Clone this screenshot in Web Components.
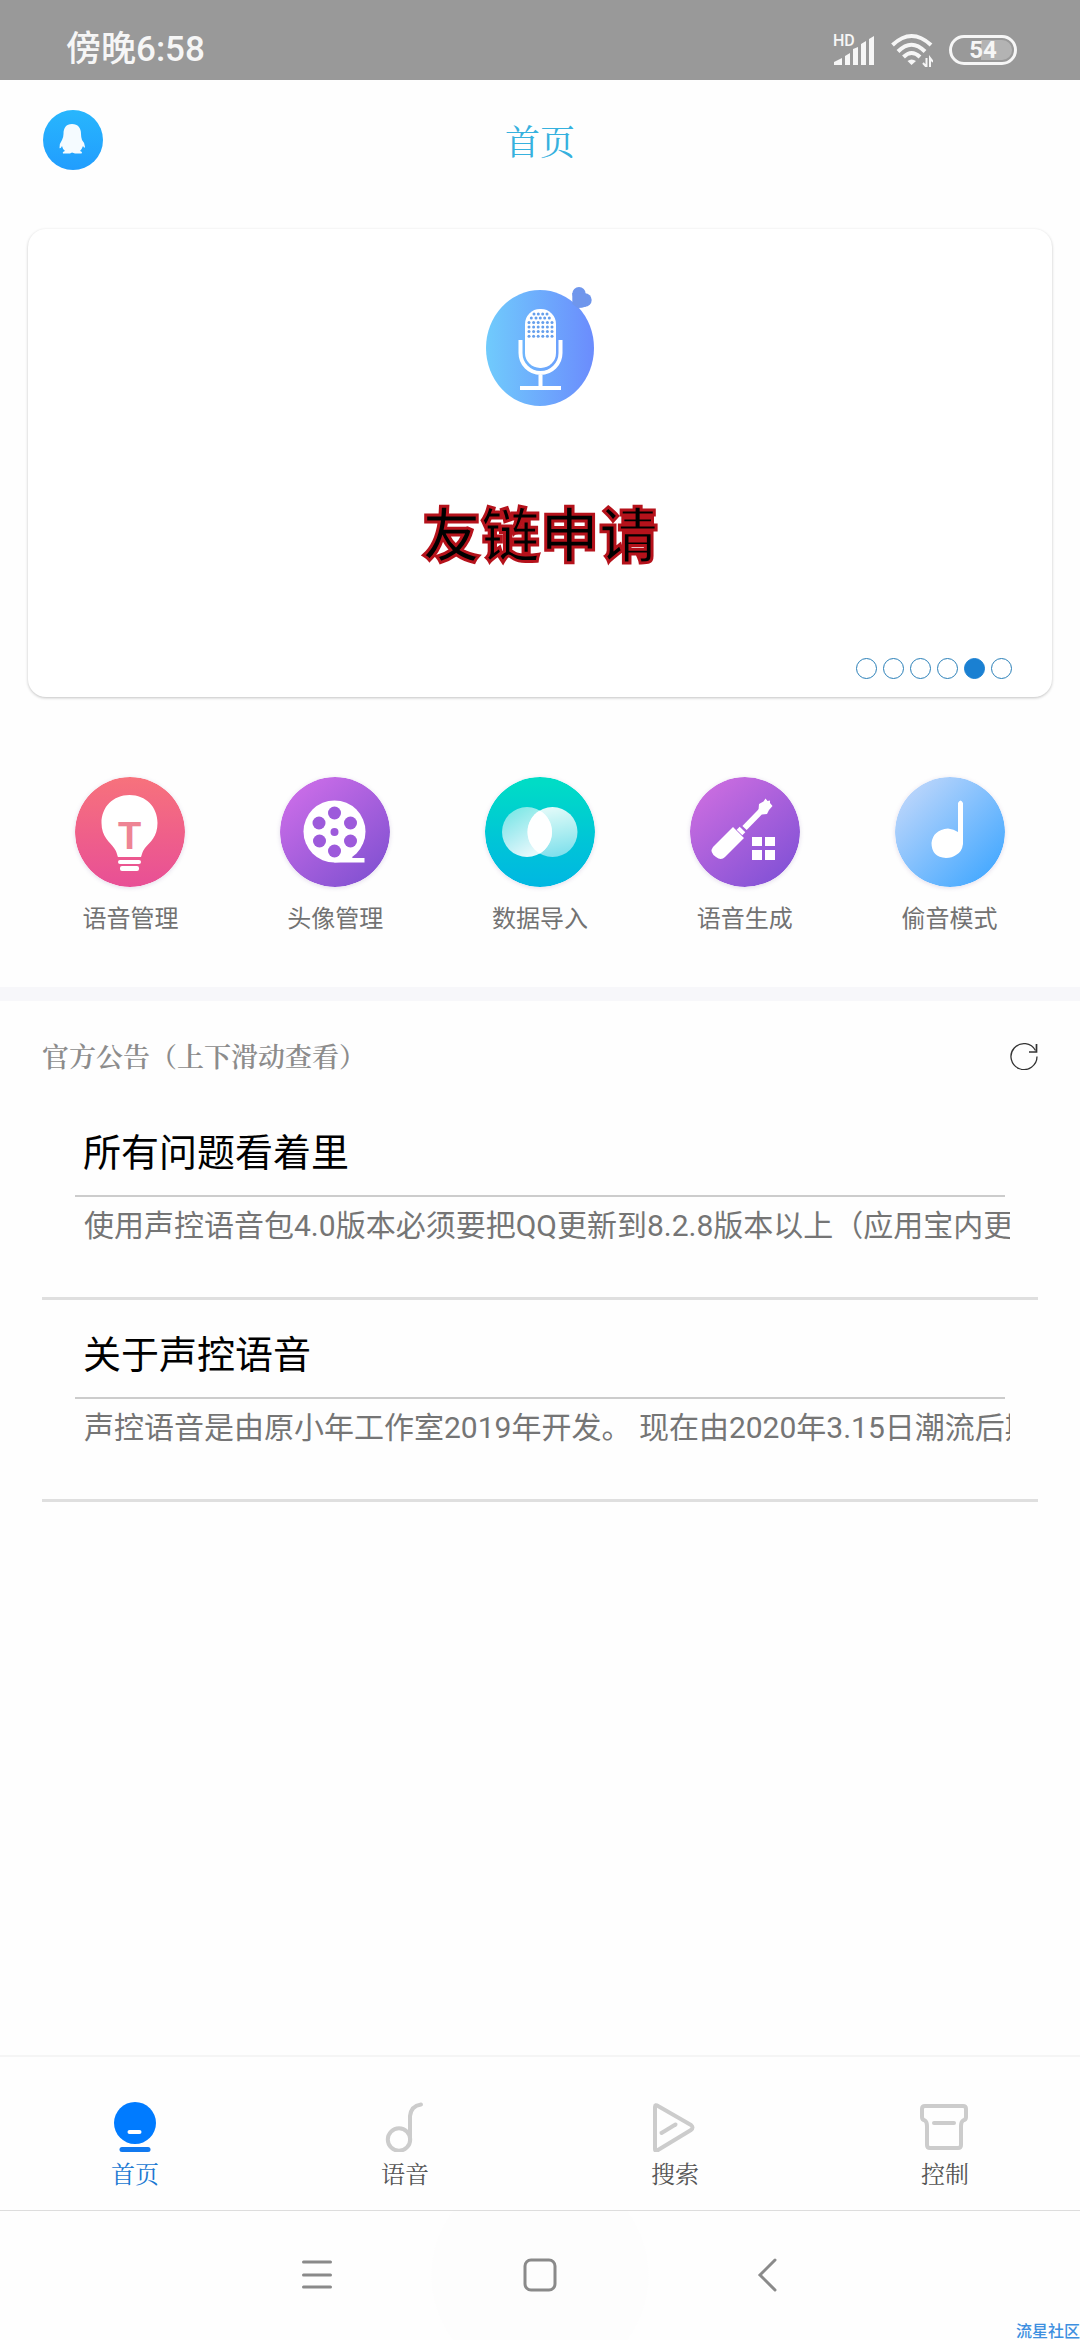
<!DOCTYPE html>
<html lang="zh-CN">
<head>
<meta charset="utf-8">
<meta name="viewport" content="width=device-width, initial-scale=1">
<title>首页</title>
<style>
  body {
    margin: 0;
    background: #fefefe;
    font-family: Roboto, "Noto Sans CJK SC", sans-serif;
    --serif: "Noto Serif CJK SC", "Noto Sans CJK SC", serif;
  }
</style>
</head>
<body>
<app-shell>
  <status-bar slot="top" time="傍晚6:58" battery="54"></status-bar>
  <top-bar slot="top">首页</top-bar>

  <banner-card count="6" active="4">友链申请</banner-card>
  <shortcut-grid>
    <shortcut-item icon="bulb">语音管理</shortcut-item>
    <shortcut-item icon="reel">头像管理</shortcut-item>
    <shortcut-item icon="merge">数据导入</shortcut-item>
    <shortcut-item icon="tool">语音生成</shortcut-item>
    <shortcut-item icon="note">偷音模式</shortcut-item>
  </shortcut-grid>
  <notice-list>
    <span slot="heading">官方公告（上下滑动查看）</span>
    <notice-item>
      <span slot="title">所有问题看着里</span>
      使用声控语音包4.0版本必须要把QQ更新到8.2.8版本以上（应用宝内更
    </notice-item>
    <notice-item>
      <span slot="title">关于声控语音</span>
      声控语音是由原小年工作室2019年开发。 现在由2020年3.15日潮流后期
    </notice-item>
  </notice-list>

  <tab-bar slot="bottom">
    <tab-item icon="home" active>首页</tab-item>
    <tab-item icon="music">语音</tab-item>
    <tab-item icon="search">搜索</tab-item>
    <tab-item icon="control">控制</tab-item>
  </tab-bar>
  <system-nav slot="bottom">流星社区</system-nav>
</app-shell>

<script>
// Ikon bulat untuk menu pintasan
const shortcutIcons = {
  bulb: `
    <linearGradient id="g" x1="0" y1="0" x2="0" y2="1"><stop stop-color="#f7727c"/><stop offset="1" stop-color="#e84f96"/></linearGradient>
    <circle cx="55" cy="55" r="55" fill="url(#g)"/>
    <path fill="#fff" d="M54.500 18C38 18 26.500 30 26.500 46C26.500 60 35 65 39 71C42 75 42 78 43 80H66C67 78 67 75 70 71C75 65 82.500 60 82.500 46C82.500 30 71 18 54.500 18Z"/>
    <rect x="43" y="83" width="23" height="4" rx="2" fill="#fff"/>
    <rect x="45" y="89" width="19" height="5" rx="2" fill="#fff"/>
    <text x="54.500" y="72" text-anchor="middle" font-family="Liberation Sans" font-weight="700" font-size="38" fill="#ee8494">T</text>`,
  reel: `
    <linearGradient id="g" x1=".1" y1=".1" x2=".8" y2=".95"><stop stop-color="#cb6de8"/><stop offset="1" stop-color="#8452d2"/></linearGradient>
    <circle cx="55" cy="55" r="55" fill="url(#g)"/>
    <circle cx="54.500" cy="54.500" r="31" fill="#fff"/>
    <path fill="#fff" d="M54 85.500H84.500V81H73L66 76Z"/>
    <g fill="#9d5adb"><circle cx="54.500" cy="36" r="6.500"/><circle cx="70.500" cy="46" r="6.500"/><circle cx="70.500" cy="64" r="6.500"/><circle cx="54.500" cy="74" r="6.500"/><circle cx="39.500" cy="64" r="6.500"/><circle cx="39" cy="46" r="6.500"/><circle cx="54.500" cy="55" r="4"/></g>`,
  merge: `
    <linearGradient id="g" x1="0" y1="0" x2="0" y2="1"><stop offset=".05" stop-color="#00dcc6"/><stop offset=".55" stop-color="#00c6d6"/><stop offset="1" stop-color="#00b7e2"/></linearGradient>
    <linearGradient id="l" x1="0" y1=".2" x2=".5" y2="1"><stop stop-color="#fff" stop-opacity=".5"/><stop offset="1" stop-color="#fff" stop-opacity=".9"/></linearGradient>
    <linearGradient id="r" x1=".3" y1="0" x2=".5" y2="1"><stop stop-color="#fff" stop-opacity=".9"/><stop offset="1" stop-color="#fff" stop-opacity=".5"/></linearGradient>
    <circle cx="55" cy="55" r="55" fill="url(#g)"/>
    <circle cx="42" cy="55" r="25" fill="url(#l)"/>
    <circle cx="67.500" cy="55" r="25" fill="url(#r)"/>
    <path fill="#fff" fill-opacity=".9" d="M54.750 33.500A25 25 0 0 1 54.750 76.500A25 25 0 0 1 54.750 33.500Z"/>`,
  tool: `
    <linearGradient id="g" x1=".1" y1=".1" x2=".8" y2=".95"><stop stop-color="#cb6de0"/><stop offset="1" stop-color="#8452d6"/></linearGradient>
    <circle cx="55" cy="55" r="55" fill="url(#g)"/>
    <path fill="#fff" d="M43 50L54 61L35 80Q31 84 26 80Q19 75 23 70Z"/>
    <path stroke="#fff" stroke-width="8" d="M49.500 55.500L52.500 52.500"/>
    <path stroke="#fff" stroke-width="6" d="M54.500 51L72 33"/>
    <path fill="#fff" d="M68.500 33L69 27L73.500 24.500L75.500 21.500L77.500 24L80 23.500V26L82.500 29L79 33L77 37L72 37.500Z"/>
    <path fill="#fff" d="M62 60h10v9h-10zM75 60h10v9h-10zM62 73h10v10h-10zM75 73h10v10h-10z"/>`,
  note: `
    <linearGradient id="g" x1=".1" y1=".1" x2=".85" y2=".85"><stop stop-color="#bdd6fb"/><stop offset="1" stop-color="#4babff"/></linearGradient>
    <circle cx="55" cy="55" r="55" fill="url(#g)"/>
    <path fill="#fff" d="M63 26Q65.500 21 68 26V67Q67 75 61 78Q57 81 51 81Q36.500 80 36.500 66Q38 53 53 51.500Q59 52 63 55Z"/>`
};

// Ikon untuk tab bawah
const tabIcons = {
  home: `
    <circle cx="25" cy="21" r="21" fill="#007bff"/>
    <path stroke="#fff" stroke-width="4" stroke-linecap="round" d="M19.500 30H29.500"/>
    <path stroke="#1079f0" stroke-width="5" stroke-linecap="round" d="M12 47.500H38"/>`,
  music: `<g class="line"><circle cx="19" cy="37.500" r="11.200"/><path d="M30 38V14Q31 4 41 2.500"/></g>`,
  search: `<g class="line"><path d="M5 5Q5 2 8 4L41 23Q44 25.500 41 28L8 48Q5 50 5 47Z"/><path d="M11.500 31L25.500 22.500"/></g>`,
  control: `<g class="line"><path d="M5 4H43Q46 4 46 7V15Q46 18 43 18.500Q41 20 41 24V43Q41 46 38 46H10Q7 46 7 43V24Q7 20 5 18.500Q2 18 2 15V7Q2 4 5 4Z"/><path d="M14 21H34"/></g>`
};

const micDots = [
  [27, [50, 54.3, 58.7, 63]],
  [31, [47.3, 52, 56.3, 60.7, 65.3]],
  ...[35.5, 40, 44.5, 49.3].map((y) => [y, [45, 49.6, 54.2, 58.8, 63.4, 68]])
];

class BaseElement extends HTMLElement {
  constructor() {
    super();
    this.attachShadow({ mode: 'open' });
  }

  connectedCallback() {
    this.shadowRoot.innerHTML = this.render();
  }
}

class AppShell extends BaseElement {
  render() {
    return `
      <style>
        :host { display: flex; flex-direction: column; min-height: 100vh; }
        main { flex: 1; }
      </style>
      <slot name="top"></slot>
      <main><slot></slot></main>
      <slot name="bottom"></slot>
    `;
  }
}
customElements.define('app-shell', AppShell);

class StatusBar extends BaseElement {
  render() {
    return `
      <style>
        :host {
          display: flex;
          align-items: center;
          height: 60px;
          padding: 20px 63px 0 66px;
          background: #999;
          color: #f6f6f6;
          box-sizing: content-box;
        }
        .time { flex: 1; font-size: 35px; line-height: 40px; font-weight: 500; }
        .icons { display: flex; align-items: center; gap: 16px; }
        svg { display: block; }
        .battery {
          box-sizing: border-box;
          width: 68px;
          height: 30px;
          border: 3px solid #f6f6f6;
          border-radius: 15px;
          padding: 2px;
          font-size: 24px;
          line-height: 20px;
          font-weight: 700;
          text-align: center;
        }
        .level {
          display: block;
          border-radius: 10px;
          background: linear-gradient(to left, #b3b3b3 54%, transparent 54%);
        }
      </style>
      <span class="time">${this.getAttribute('time')}</span>
      <div class="icons">
        <svg width="42" height="32" viewBox="0 0 42 32" fill="#f6f6f6">
          <text x="0" y="12" font-family="Roboto" font-weight="500" font-size="16">HD</text>
          <path d="M1 31V28L9 24V31ZM12 31V22L17 19V31ZM20 31V15L25 13V31ZM28 31V10L33 7V31ZM36 31V5L41 2V31Z"/>
        </svg>
        <svg width="42" height="34" viewBox="0 0 42 34" fill="none" stroke="#f6f6f6" stroke-width="4">
          <path d="M1.500 12Q20.500 -6 40 12M7 18.500Q20.500 5 34 18.500M12.500 24Q20.500 16 29 24"/>
          <path fill="#f6f6f6" stroke="none" d="M16.500 28Q20.500 25 25 28L20.500 32Z"/>
          <path stroke-width="2" d="M35.500 25V34L32 30M39 34V25L42 29"/>
        </svg>
        <div class="battery"><span class="level">${this.getAttribute('battery')}</span></div>
      </div>
    `;
  }
}
customElements.define('status-bar', StatusBar);

class TopBar extends BaseElement {
  render() {
    return `
      <style>
        :host {
          display: grid;
          grid-template-columns: 60px 1fr 60px;
          align-items: center;
          height: 120px;
          padding: 0 43px;
        }
        button { border: 0; padding: 0; background: none; }
        svg { display: block; }
        h1 {
          margin: 0;
          font: 400 35px/44px var(--serif);
          color: #36b1de;
          text-align: center;
        }
      </style>
      <button aria-label="QQ">
        <svg width="60" height="60" viewBox="0 0 60 60">
          <linearGradient id="q" x1="0" y1="0" x2="0" y2="1"><stop stop-color="#28b6fd"/><stop offset="1" stop-color="#219dfe"/></linearGradient>
          <circle cx="30" cy="30" r="30" fill="url(#q)"/>
          <path fill="#f5fbff" d="M29 14C23 14 20.500 18 20.500 24Q20.500 27 19 30Q16 34 16.500 38Q17.500 39 19 36Q19.500 39 22 41Q19 42 20 43.500H27L29 42.500L32 43.500H38.500Q40 42 37 41Q39 39 40 36Q41.500 39 42 37Q42 33 39 30Q38 27 38 24C38 18 35 14 29 14Z"/>
        </svg>
      </button>
      <h1><slot></slot></h1>
    `;
  }
}
customElements.define('top-bar', TopBar);

class BannerCard extends BaseElement {
  render() {
    const count = Number(this.getAttribute('count'));
    const active = Number(this.getAttribute('active'));
    const dots = micDots.map(([y, xs]) => xs.map((x) => `<circle cx="${x}" cy="${y}" r="1.500"/>`).join('')).join('');

    return `
      <style>
        :host {
          display: flex;
          flex-direction: column;
          align-items: center;
          margin: 29px 28px 0;
          padding: 58px 40px 18px;
          border-radius: 18px;
          background: #fff;
          box-shadow: 0 1px 3px rgba(0, 0, 0, .24);
        }
        h2 {
          margin: 94px 0 85px;
          font-size: 59px;
          line-height: 72px;
          font-weight: 700;
          color: #000;
          -webkit-text-stroke: 3px #b5121b;
          paint-order: normal;
        }
        .dots { display: flex; gap: 6px; align-self: flex-end; }
        button {
          box-sizing: border-box;
          width: 21px;
          height: 21px;
          padding: 0;
          border: 1px solid #2a7fb8;
          border-radius: 50%;
          background: none;
        }
        button.on { background: #1a80d2; border-color: #1a80d2; }
      </style>
      <svg width="112" height="120" viewBox="0 0 112 120">
        <linearGradient id="m"><stop stop-color="#70cbfc"/><stop offset="1" stop-color="#6b8cfd"/></linearGradient>
        <ellipse cx="56" cy="61" rx="54" ry="58" fill="url(#m)"/>
        <g fill="#6f96ec"><circle cx="95" cy="6.700" r="6.700"/><circle cx="101" cy="13" r="6.700"/><path d="M88.300 6V17L94 21Q98 21 102 19.500L101 7Z"/></g>
        <rect x="41" y="22" width="31" height="59" rx="15" fill="#fff"/>
        <g fill="#659fec">${dots}</g>
        <g fill="none" stroke="#fff" stroke-width="4"><path d="M36.500 53V66A20 20 0 0 0 76.500 66V53M56.500 86V100M36 101H77"/></g>
      </svg>
      <h2><slot></slot></h2>
      <div class="dots">
        ${Array.from({ length: count }, (_, i) => `<button class="${i === active ? 'on' : ''}" aria-label="${i + 1}"></button>`).join('')}
      </div>
    `;
  }
}
customElements.define('banner-card', BannerCard);

class ShortcutGrid extends BaseElement {
  render() {
    return `
      <style>
        :host {
          display: grid;
          grid-template-columns: repeat(5, 1fr);
          padding: 80px 28px 52px;
        }
      </style>
      <slot></slot>
    `;
  }
}
customElements.define('shortcut-grid', ShortcutGrid);

class ShortcutItem extends BaseElement {
  render() {
    return `
      <style>
        :host { display: flex; justify-content: center; }
        button {
          display: flex;
          flex-direction: column;
          align-items: center;
          gap: 16px;
          padding: 0;
          border: 0;
          background: none;
          font: inherit;
          font-size: 24px;
          line-height: 32px;
          color: #727272;
        }
        svg { display: block; border-radius: 50%; box-shadow: 0 1px 4px rgba(120, 90, 160, .2); }
      </style>
      <button>
        <svg width="110" height="110" viewBox="0 0 110 110">${shortcutIcons[this.getAttribute('icon')]}</svg>
        <span><slot></slot></span>
      </button>
    `;
  }
}
customElements.define('shortcut-item', ShortcutItem);

class NoticeList extends BaseElement {
  render() {
    return `
      <style>
        :host { display: block; border-top: 14px solid #f7f7fa; padding: 35px 42px 0; }
        header { display: flex; align-items: center; justify-content: space-between; margin-bottom: 22px; }
        h2 { margin: 0; font: 600 27px/40px var(--serif); color: #8c8c8c; }
        button { border: 0; padding: 0; background: none; }
        svg { display: block; }
      </style>
      <header>
        <h2><slot name="heading"></slot></h2>
        <button aria-label="刷新">
          <svg width="28" height="28" viewBox="0 0 28 28" fill="none" stroke="#333" stroke-width="1.300">
            <path d="M27 14.500A13 13 0 1 1 25.500 8.500"/>
            <path stroke-width="1.700" d="M26.500 2V10H19"/>
          </svg>
        </button>
      </header>
      <slot></slot>
    `;
  }
}
customElements.define('notice-list', NoticeList);

class NoticeItem extends BaseElement {
  render() {
    return `
      <style>
        :host { display: block; padding: 27px 0 51px; border-bottom: 3px solid #dfdfdf; }
        h3 {
          margin: 0 33px 9px;
          padding: 0 8px 14px;
          border-bottom: 2px solid #ccc;
          font-size: 38px;
          line-height: 56px;
          font-weight: 400;
          color: #000;
        }
        p {
          margin: 0 28px 0 42px;
          overflow: hidden;
          white-space: nowrap;
          font-size: 30px;
          line-height: 40px;
          color: #757575;
        }
      </style>
      <h3><slot name="title"></slot></h3>
      <p><slot></slot></p>
    `;
  }
}
customElements.define('notice-item', NoticeItem);

class TabBar extends BaseElement {
  render() {
    return `
      <style>
        :host {
          display: grid;
          grid-template-columns: repeat(4, 1fr);
          padding: 45px 0 23px;
          border-top: 2px solid #f5f5f5;
        }
      </style>
      <slot></slot>
    `;
  }
}
customElements.define('tab-bar', TabBar);

class TabItem extends BaseElement {
  render() {
    return `
      <style>
        :host { display: flex; justify-content: center; color: #555; }
        :host([active]) { color: #1a78d2; }
        a {
          display: flex;
          flex-direction: column;
          align-items: center;
          gap: 7px;
          color: inherit;
          text-decoration: none;
          font: 400 24px/28px var(--serif);
        }
        svg { display: block; fill: none; }
        .line { stroke: #ccc; stroke-width: 4; stroke-linecap: round; stroke-linejoin: round; }
      </style>
      <a href="#${this.getAttribute('icon')}">
        <svg width="50" height="50" viewBox="0 0 50 50">${tabIcons[this.getAttribute('icon')]}</svg>
        <span><slot></slot></span>
      </a>
    `;
  }
}
customElements.define('tab-item', TabItem);

class SystemNav extends BaseElement {
  render() {
    return `
      <style>
        :host {
          display: flex;
          justify-content: center;
          position: relative;
          padding: 47px 0 48px;
          border-top: 1px solid #ddd;
          background: radial-gradient(circle, #fdfdfd 108px, transparent 109px);
        }
        button {
          display: flex;
          justify-content: center;
          width: 225px;
          padding: 0;
          border: 0;
          background: none;
        }
        svg { fill: none; stroke: #8a8a8a; stroke-width: 3; stroke-linecap: round; }
        .mark {
          position: absolute;
          right: 0;
          bottom: 0;
          font-size: 16px;
          line-height: 16px;
          font-weight: 500;
          color: #3d8fe0;
        }
      </style>
      <button aria-label="菜单"><svg width="34" height="34" viewBox="0 0 34 34"><path d="M5.500 4H32.500M5.500 17H32.500M5.500 29H32.500"/></svg></button>
      <button aria-label="主页"><svg width="34" height="34" viewBox="0 0 34 34"><rect x="2" y="2" width="30" height="30" rx="6"/></svg></button>
      <button aria-label="返回"><svg width="34" height="34" viewBox="0 0 34 34"><path d="M27 2L12 17L27 32"/></svg></button>
      <span class="mark"><slot></slot></span>
    `;
  }
}
customElements.define('system-nav', SystemNav);
</script>
</body>
</html>
